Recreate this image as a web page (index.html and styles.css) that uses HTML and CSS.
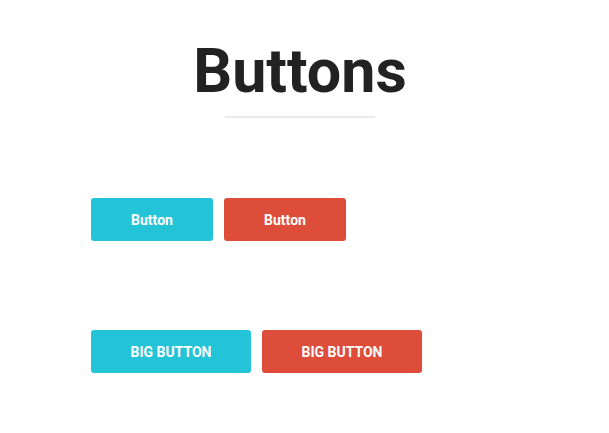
FILE: index.html
```html
<!DOCTYPE html>
<html lang="en">
<head>
    <meta charset="UTF-8">
    <title>Buttons</title>
    <link rel="stylesheet" href="styles.css">
</head>
<body>
    <div class="header">
        <h1 class="title">Buttons</h1>
        <hr class="divider">
    </div>
    <div class="row row-small">
        <button class="btn btn-info">Button</button>
        <button class="btn btn-danger">Button</button>
    </div>
    <div class="row row-big">
        <button class="btn btn-big btn-info">BIG BUTTON</button>
        <button class="btn btn-big btn-danger">BIG BUTTON</button>
    </div>
</body>
</html>
```

FILE: styles.css
```css
body {
    margin: 0;
    padding: 0;
    font-family: Roboto, "Liberation Sans", sans-serif;
    background: #fff;
    color: #222;
}
.header {
    width: 600px;
    padding-top: 34px;
}
.title {
    margin: 0;
    font-size: 61px;
    font-weight: 700;
    line-height: 74px;
    text-align: center;
    color: #222;
}
.divider {
    width: 150px;
    height: 2px;
    margin: 8px auto 0;
    border: 0;
    background: #e8e8e8;
}
.row {
    display: flex;
    gap: 11px;
    padding-left: 91px;
}
.row-small {
    margin-top: 80px;
}
.row-big {
    margin-top: 89px;
}
.btn {
    width: 122px;
    height: 43px;
    border: 0;
    border-radius: 3px;
    font-family: Roboto, "Liberation Sans", sans-serif;
    font-size: 14px;
    font-weight: 700;
    color: #fff;
    cursor: pointer;
}
.btn-big {
    width: 160px;
}
.btn-info {
    background: #24c4d8;
}
.btn-danger {
    background: #de4c3a;
}
```
